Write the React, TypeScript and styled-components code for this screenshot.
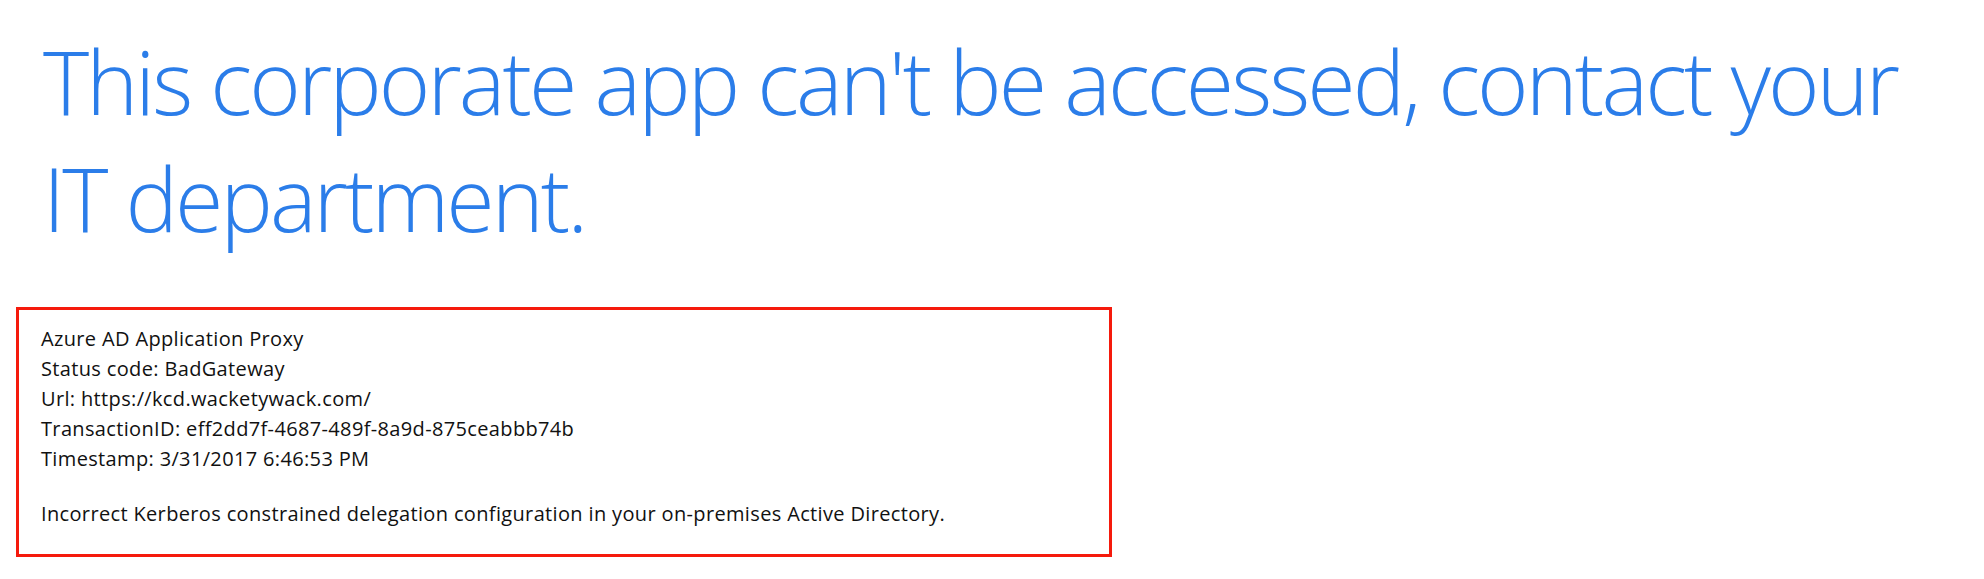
import React from "react";
import styled, {createGlobalStyle} from "styled-components";

const GlobalStyle = createGlobalStyle`
    html, body {
        margin: 0;
        padding: 0;
        background: #fff;
    }
`

const Page = styled.div`
    padding: 23px 16px 0 16px;
    font-family: "Open Sans", "Liberation Sans", sans-serif;
`

const Title = styled.h1`
    margin: 0 0 50px 27px;
    font-size: 88px;
    font-weight: 300;
    line-height: 117px;
    letter-spacing: -2.9px;
    color: #2b7de9;
`

const ErrorBox = styled.div`
    width: 1046px;
    border: 3px solid #f51a0c;
    padding: 14px 22px 25px 22px;
    font-size: 20px;
    line-height: 30px;
    letter-spacing: 0.35px;
    color: #111;
`

const Line = styled.div``

const Message = styled.p`
    margin: 25px 0 0 0;
`

const App = () => {
    return (
        <Page>
            <GlobalStyle/>
            <Title>This corporate app can't be accessed, contact your IT department.</Title>
            <ErrorBox>
                <Line>Azure AD Application Proxy</Line>
                <Line>Status code: BadGateway</Line>
                <Line>Url: https://kcd.wacketywack.com/</Line>
                <Line>TransactionID: eff2dd7f-4687-489f-8a9d-875ceabbb74b</Line>
                <Line>Timestamp: 3/31/2017 6:46:53 PM</Line>
                <Message>Incorrect Kerberos constrained delegation configuration in your on-premises Active Directory.</Message>
            </ErrorBox>
        </Page>
    )
}

export default App;
